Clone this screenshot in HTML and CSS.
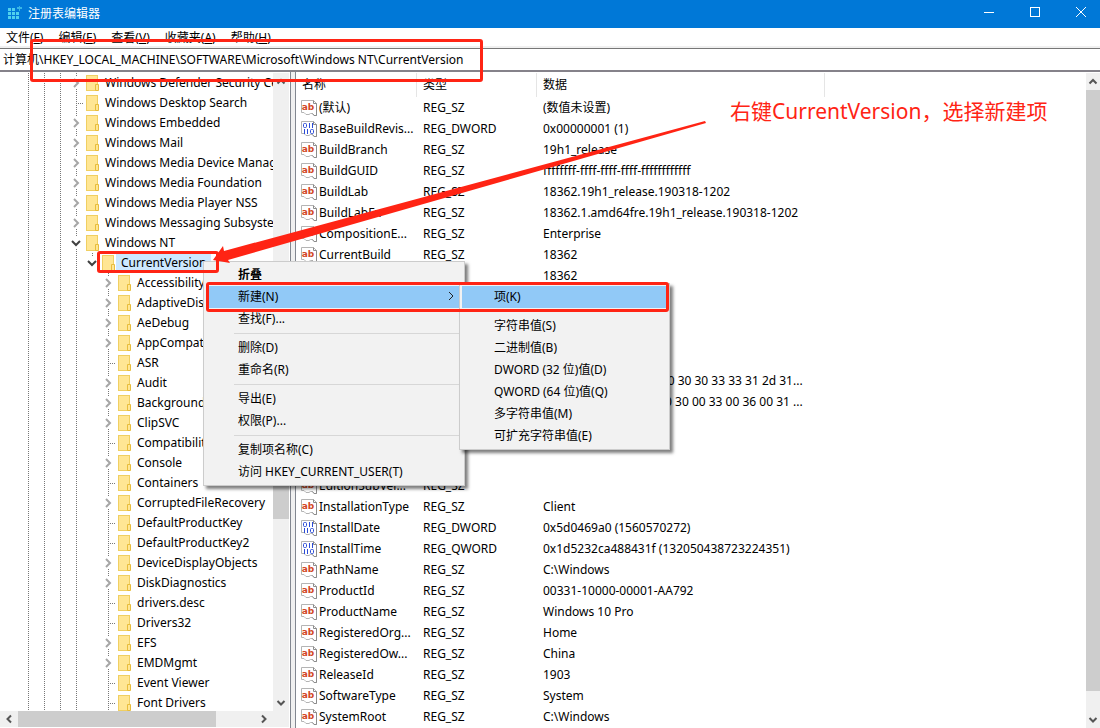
FILE: index.html
```
<!DOCTYPE html>
<html lang="zh-CN">
<head>
  <meta charset="UTF-8">
  <title>注册表编辑器</title>
  <meta name="viewport" content="width=device-width, initial-scale=1.0">
  <link rel="stylesheet" href="styles.css">
</head>
<body>
  <svg class="defs" aria-hidden="true">
    <defs>
      <symbol id="folder" viewBox="0 0 16 16">
        <rect x="2.5" y="0.500" width="11" height="15" fill="#ffe694" stroke="#f0cf62"/>
        <path d="M11.500 15.500V9.500H14.500V15.500Z" fill="#ffe694" stroke="#e8bd3c"/>
      </symbol>
      <symbol id="page" viewBox="0 0 16 16">
        <path d="M.5 .5H12.500L15.500 3.500V15.500H13L11.500 13.500H9.500L8 14.500H5L3 12.500H.5Z" fill="#fff" stroke="#b4b4b4"/>
        <path d="M12.500 .5V3.500H15.500V15.500H13L11.500 13.500" fill="none" stroke="#8c8c8c"/>
      </symbol>
      <symbol id="up" viewBox="0 0 10 10"><path d="M1.500 6.500L5 3L8.500 6.500" fill="none" stroke="#555" stroke-width="2"/></symbol>
      <symbol id="down" viewBox="0 0 10 10"><path d="M1.500 3L5 6.500L8.500 3" fill="none" stroke="#555" stroke-width="2"/></symbol>
      <symbol id="left" viewBox="0 0 10 10"><path d="M7 1.500L3.500 5L7 8.500" fill="none" stroke="#555" stroke-width="2"/></symbol>
      <symbol id="right" viewBox="0 0 10 10"><path d="M3 1.500L6.500 5L3 8.500" fill="none" stroke="#555" stroke-width="2"/></symbol>
    </defs>
  </svg>

  <div class="window">
    <header class="titlebar">
      <svg class="app-icon" viewBox="0 0 16 16">
        <g fill="#4fd0ee">
          <rect x="2" y="2" width="3" height="3"/><rect x="6" y="2" width="3" height="3"/>
          <rect x="2" y="6" width="3" height="3"/><rect x="6" y="6" width="3" height="3"/><rect x="10" y="6" width="3" height="3"/>
          <rect x="2" y="10" width="3" height="3"/><rect x="6" y="10" width="3" height="3"/><rect x="10" y="10" width="3" height="3"/>
          <path d="M13 0h1v1h2v2h-2v2h-1v-2h-2v-2h2z" opacity="0.7"/>
        </g>
      </svg>
      <h1>注册表编辑器</h1>
      <div class="window-buttons">
        <button type="button" aria-label="最小化"><svg viewBox="0 0 12 12"><path d="M1 6.500H11" /></svg></button>
        <button type="button" aria-label="最大化"><svg viewBox="0 0 12 12"><rect x="1.500" y="1.500" width="9" height="9"/></svg></button>
        <button type="button" aria-label="关闭"><svg viewBox="0 0 12 12"><path d="M1 1L11 11M11 1L1 11"/></svg></button>
      </div>
    </header>

    <nav class="menubar">
      <button type="button">文件(<u>F</u>)</button>
      <button type="button">编辑(<u>E</u>)</button>
      <button type="button">查看(<u>V</u>)</button>
      <button type="button">收藏夹(<u>A</u>)</button>
      <button type="button">帮助(<u>H</u>)</button>
    </nav>

    <input class="address" type="text" aria-label="地址" value="计算机\HKEY_LOCAL_MACHINE\SOFTWARE\Microsoft\Windows NT\CurrentVersion">

    <main class="panes">
      <section class="tree-pane">
        <div class="tree-body">
          <ul class="tree" id="tree"></ul>
          <div class="scroll-v">
            <svg class="arrow"><use href="#up"/></svg>
            <div class="thumb"></div>
            <svg class="arrow"><use href="#down"/></svg>
          </div>
        </div>
        <div class="scroll-h">
          <svg class="arrow"><use href="#left"/></svg>
          <div class="thumb"></div>
          <svg class="arrow"><use href="#right"/></svg>
        </div>
      </section>
      <div class="splitter"></div>
      <section class="list-pane">
        <div class="list-scroll">
          <table class="values">
            <thead>
              <tr><th class="col-name">名称</th><th class="col-type">类型</th><th class="col-data">数据</th><th></th></tr>
            </thead>
            <tbody id="values"></tbody>
          </table>
        </div>
        <div class="scroll-v">
          <svg class="arrow"><use href="#up"/></svg>
          <div class="thumb"></div>
          <svg class="arrow"><use href="#down"/></svg>
        </div>
      </section>
    </main>

    <div class="menu context-menu">
      <button type="button" class="default">折叠</button>
      <button type="button" class="active">新建(N)<svg viewBox="0 0 8 10"><path d="M2 1L6 5L2 9"/></svg></button>
      <button type="button">查找(F)...</button>
      <hr>
      <button type="button">删除(D)</button>
      <button type="button">重命名(R)</button>
      <hr>
      <button type="button">导出(E)</button>
      <button type="button">权限(P)...</button>
      <hr>
      <button type="button">复制项名称(C)</button>
      <button type="button">访问 HKEY_CURRENT_USER(T)</button>
    </div>

    <div class="menu submenu">
      <button type="button" class="active">项(K)</button>
      <hr>
      <button type="button">字符串值(S)</button>
      <button type="button">二进制值(B)</button>
      <button type="button">DWORD (32 位)值(D)</button>
      <button type="button">QWORD (64 位)值(Q)</button>
      <button type="button">多字符串值(M)</button>
      <button type="button">可扩充字符串值(E)</button>
    </div>

    <div class="mark mark-address"></div>
    <div class="mark mark-key"></div>
    <div class="mark mark-new"></div>
    <svg class="mark-arrow" viewBox="0 0 500 150">
      <path d="M493 1L494 3L16 140L18 143L1 140L11 126L12 131Z"/>
    </svg>
    <p class="note">右键CurrentVersion，选择新建项</p>
  </div>

  <script>
    // [level, name, state] - state: + collapsed, - expanded, empty for a leaf
    const keys = [
      [4, 'Windows Defender Security Center', '+'],
      [4, 'Windows Desktop Search', ''],
      [4, 'Windows Embedded', '+'],
      [4, 'Windows Mail', '+'],
      [4, 'Windows Media Device Manager', '+'],
      [4, 'Windows Media Foundation', '+'],
      [4, 'Windows Media Player NSS', '+'],
      [4, 'Windows Messaging Subsystem', '+'],
      [4, 'Windows NT', '-'],
      [5, 'CurrentVersion', '-'],
      [6, 'Accessibility', '+'],
      [6, 'AdaptiveDisplayBrightness', '+'],
      [6, 'AeDebug', '+'],
      [6, 'AppCompatFlags', '+'],
      [6, 'ASR', ''],
      [6, 'Audit', '+'],
      [6, 'BackgroundModel', '+'],
      [6, 'ClipSVC', '+'],
      [6, 'Compatibility32', ''],
      [6, 'Console', '+'],
      [6, 'Containers', ''],
      [6, 'CorruptedFileRecovery', '+'],
      [6, 'DefaultProductKey', ''],
      [6, 'DefaultProductKey2', ''],
      [6, 'DeviceDisplayObjects', '+'],
      [6, 'DiskDiagnostics', '+'],
      [6, 'drivers.desc', ''],
      [6, 'Drivers32', ''],
      [6, 'EFS', '+'],
      [6, 'EMDMgmt', '+'],
      [6, 'Event Viewer', ''],
      [6, 'Font Drivers', '']
    ];

    const values = [
      ['(默认)', 'REG_SZ', '(数值未设置)'],
      ['BaseBuildRevis...', 'REG_DWORD', '0x00000001 (1)'],
      ['BuildBranch', 'REG_SZ', '19h1_release'],
      ['BuildGUID', 'REG_SZ', 'ffffffff-ffff-ffff-ffff-ffffffffffff'],
      ['BuildLab', 'REG_SZ', '18362.19h1_release.190318-1202'],
      ['BuildLabEx', 'REG_SZ', '18362.1.amd64fre.19h1_release.190318-1202'],
      ['CompositionE...', 'REG_SZ', 'Enterprise'],
      ['CurrentBuild', 'REG_SZ', '18362'],
      ['CurrentBuildN...', 'REG_SZ', '18362'],
      ['CurrentMajor...', 'REG_DWORD', '0x0000000a (10)'],
      ['CurrentMinor...', 'REG_DWORD', '0x00000000 (0)'],
      ['CurrentType', 'REG_SZ', 'Multiprocessor Free'],
      ['CurrentVersion', 'REG_SZ', '6.3'],
      ['DigitalProductId', 'REG_BINARY', 'a4 00 00 00 03 00 00 00 30 30 33 33 31 2d 31...'],
      ['DigitalProduct...', 'REG_BINARY', 'f8 04 00 00 04 00 00 00 30 00 33 00 36 00 31 ...'],
      ['EditionID', 'REG_SZ', 'Professional'],
      ['EditionSubMa...', 'REG_SZ', ''],
      ['EditionSubstri...', 'REG_SZ', ''],
      ['EditionSubVer...', 'REG_SZ', ''],
      ['InstallationType', 'REG_SZ', 'Client'],
      ['InstallDate', 'REG_DWORD', '0x5d0469a0 (1560570272)'],
      ['InstallTime', 'REG_QWORD', '0x1d5232ca488431f (132050438723224351)'],
      ['PathName', 'REG_SZ', 'C:\\Windows'],
      ['ProductId', 'REG_SZ', '00331-10000-00001-AA792'],
      ['ProductName', 'REG_SZ', 'Windows 10 Pro'],
      ['RegisteredOrg...', 'REG_SZ', 'Home'],
      ['RegisteredOw...', 'REG_SZ', 'China'],
      ['ReleaseId', 'REG_SZ', '1903'],
      ['SoftwareType', 'REG_SZ', 'System'],
      ['SystemRoot', 'REG_SZ', 'C:\\Windows']
    ];

    const chevrons = {
      '+': '<svg class="chevron" viewBox="0 0 12 12"><path d="M4 2L8 6L4 10" stroke="#a6a6a6"/></svg>',
      '-': '<svg class="chevron" viewBox="0 0 12 12"><path d="M2 4L6 8L10 4" stroke="#404040"/></svg>'
    };

    document.getElementById('tree').innerHTML = keys.map(([level, name, state]) => {
      let guides = '';
      for (let i = 1; i < level; i++) {
        // CurrentVersion is the last child, so its column has no line
        guides += `<span class="guide${i < 5 ? ' line' : ''}"></span>`;
      }
      const joint = state ? chevrons[state] : '';
      const last = level === 5 ? ' last' : '';
      return `<li class="${name === 'CurrentVersion' ? 'selected' : ''}">${guides}<span class="guide line${state ? last : ' leaf'}">${joint}</span><svg class="folder"><use href="#folder"/></svg><span class="key">${name}</span></li>`;
    }).join('');

    document.getElementById('values').innerHTML = values.map(([name, type, data]) => {
      const text = type === 'REG_SZ';
      // numbers get the blue mark: rings and bars in two rows
      const label = text
        ? '<text x="7" y="10" class="ab">ab</text>'
        : '<g class="bits"><rect x="2.5" y="2.5" width="3" height="4" rx="1"/><path d="M8.500 2V7M11.500 2V7M3.500 8V13M6.500 8V13"/><rect x="9.500" y="8.500" width="3" height="4" rx="1"/></g>';
      return `<tr><td><div class="name"><svg class="value-icon" viewBox="0 0 16 16"><use href="#page"/>${label}</svg>${name}</div></td><td>${type}</td><td colspan="2">${data}</td></tr>`;
    }).join('');
  </script>
</body>
</html>
```
FILE: styles.css
```
* {
  box-sizing: border-box;
}
body {
  margin: 0;
  font-family: "Noto Sans", "Noto Sans CJK SC", sans-serif;
  font-size: 12px;
  color: #000;
  background: #fff;
}
button,
input {
  font: inherit;
  color: inherit;
  border: 0;
  background: none;
}
.defs {
  position: absolute;
  width: 0;
  height: 0;
}
.window {
  position: relative;
  display: flex;
  flex-direction: column;
  height: 100vh;
  overflow: hidden;
}

/* title bar */
.titlebar {
  display: flex;
  align-items: center;
  flex: none;
  height: 28px;
  padding-left: 6px;
  background: #0078d7;
  color: #fff;
}
.titlebar h1 {
  flex: 1;
  margin: 0 0 2px 6px;
  font-size: 12px;
  font-weight: 400;
}
.app-icon {
  width: 16px;
  height: 16px;
}
.window-buttons {
  display: flex;
  margin-right: -4px;
}
.window-buttons button {
  width: 46px;
  height: 28px;
  padding: 0 0 4px;
}
.window-buttons svg {
  display: block;
  width: 12px;
  height: 12px;
  margin: 0 auto;
  fill: none;
  stroke: #fff;
}

/* menu bar and address */
.menubar {
  display: flex;
  flex: none;
  gap: 15px;
  height: 20px;
  padding: 0 6px;
  border-bottom: 2px solid #f0f0f0;
}
.menubar button {
  padding: 0;
  line-height: 20px;
}
.address {
  flex: none;
  width: 100%;
  height: 24px;
  padding: 0 3px 2px;
  border-top: 1px solid #777;
  border-bottom: 2px solid #85828a;
  outline: none;
}

/* panes */
.panes {
  display: flex;
  flex: 1;
  min-height: 0;
}
.tree-pane {
  display: flex;
  flex-direction: column;
  flex: none;
  width: 290px;
  padding: 1px 1px 0 0;
}
.tree-body {
  display: flex;
  flex: 1;
  min-height: 0;
}
.tree {
  flex: 1;
  min-width: 0;
  margin: 0;
  padding: 0 0 0 20px;
  overflow: hidden;
  list-style: none;
}
.tree li {
  display: flex;
  height: 20px;
  white-space: nowrap;
}
.guide {
  flex: none;
  width: 16px;
}
.guide.line {
  background: repeating-linear-gradient(#777 0 1px, #fff 1px 2px) 8px 0 / 1px 100% no-repeat;
}
.guide.leaf {
  background:
    repeating-linear-gradient(#777 0 1px, #fff 1px 2px) 8px 0 / 1px 100% no-repeat,
    repeating-linear-gradient(90deg, #777 0 1px, #fff 1px 2px) 8px 10px / 8px 1px no-repeat;
}
.guide.last {
  background-size: 1px 4px;
}
.chevron {
  display: block;
  width: 12px;
  height: 12px;
  margin: 4px 2px;
  background: #fff;
  fill: none;
  stroke-width: 2;
}
.folder {
  flex: none;
  width: 16px;
  height: 16px;
  margin-top: 2px;
}
.key {
  padding: 0 5px;
  line-height: 20px;
}
.selected .key {
  background: #cce8ff;
}
.splitter {
  flex: none;
  width: 6px;
  background: #f0f0f0;
  border-left: 1px solid #828790;
  border-right: 1px solid #828790;
}

/* scroll bars */
.scroll-v,
.scroll-h {
  display: flex;
  flex: none;
  background: #f0f0f0;
}
.scroll-v {
  flex-direction: column;
  justify-content: space-between;
  width: 16px;
}
.scroll-h {
  height: 16px;
  margin-bottom: 1px;
}
.arrow {
  flex: none;
  width: 10px;
  height: 10px;
}
.scroll-v .arrow {
  margin: 4px auto 3px;
}
.scroll-h .arrow {
  margin: 3px 4px;
}
.thumb {
  background: #cdcdcd;
}
.tree-pane .scroll-v .thumb {
  height: 56px;
  margin-top: 373px;
  margin-bottom: auto;
}
.scroll-h .thumb {
  width: 198px;
  margin-right: auto;
}
.scroll-h .arrow:last-child {
  margin-right: 20px;
}
.list-pane .scroll-v {
  width: 14px;
}
.list-pane .thumb {
  flex: 1;
  margin-bottom: 20px;
}

/* value list */
.list-pane {
  display: flex;
  flex: 1;
  min-width: 0;
  padding-top: 1px;
}
.list-scroll {
  flex: 1;
  min-width: 0;
  overflow: hidden;
}
.values {
  width: 100%;
  table-layout: fixed;
  border-collapse: separate;
  border-spacing: 0;
}
.values th {
  height: 24px;
  padding: 0 6px 2px;
  border-right: 1px solid #e5e5e5;
  font-weight: 400;
  text-align: left;
}
.values th:last-child {
  border-right: 0;
}
.col-name {
  width: 121px;
}
.col-type {
  width: 120px;
}
.col-data {
  width: 288px;
}
.values td {
  height: 21px;
  padding: 0 6px;
  line-height: 20px;
  white-space: nowrap;
}
.values td:first-child {
  padding: 0 0 0 5px;
}
.name {
  display: flex;
  align-items: center;
  gap: 2px;
}
.value-icon {
  flex: none;
  width: 16px;
  height: 16px;
}
.ab {
  font-family: "DejaVu Sans", sans-serif;
  font-size: 9px;
  font-weight: 700;
  text-anchor: middle;
  fill: #d24726;
}
.bits {
  fill: none;
  stroke: #2a4bd7;
}

/* popup menus */
.menu {
  position: absolute;
  padding: 2px;
  background: #f2f2f2;
  border: 1px solid #ccc;
  box-shadow: 3px 3px 3px rgba(0, 0, 0, 0.5);
}
.menu button {
  display: flex;
  align-items: center;
  width: 100%;
  height: 22px;
  padding: 0 3px 2px 32px;
  text-align: left;
}
.menu button.active {
  background: #91c9f7;
}
.menu button.default {
  font-weight: 700;
}
.menu svg {
  width: 8px;
  height: 10px;
  margin-left: auto;
  fill: none;
  stroke: #222;
}
.menu hr {
  height: 1px;
  margin: 3px 0 3px 28px;
  border: 0;
  background: #d7d7d7;
}
.context-menu {
  top: 261px;
  left: 203px;
  width: 262px;
}
.context-menu svg {
  margin-right: 4px;
}
.submenu {
  top: 283px;
  left: 459px;
  width: 211px;
}

/* red annotations */
.mark {
  position: absolute;
  border: 3px solid #ff2414;
  border-radius: 3px;
}
.mark-address {
  top: 39px;
  left: 30px;
  width: 453px;
  height: 43px;
}
.mark-key {
  top: 251px;
  left: 97px;
  width: 122px;
  height: 22px;
}
.mark-new {
  top: 282px;
  left: 206px;
  width: 463px;
  height: 30px;
}
.mark-arrow {
  position: absolute;
  top: 120px;
  left: 212px;
  width: 500px;
  height: 150px;
  fill: #ff2414;
}
.note {
  position: absolute;
  top: 96px;
  left: 730px;
  margin: 0;
  font-size: 21px;
  line-height: 30px;
  color: #ff2414;
  white-space: nowrap;
}
```
